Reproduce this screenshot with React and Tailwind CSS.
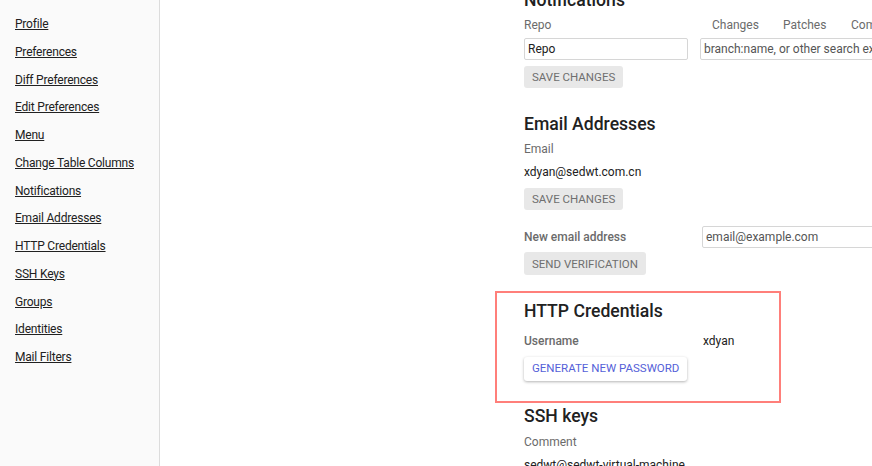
import React from "react";

const navItems = [
  "Profile",
  "Preferences",
  "Diff Preferences",
  "Edit Preferences",
  "Menu",
  "Change Table Columns",
  "Notifications",
  "Email Addresses",
  "HTTP Credentials",
  "SSH Keys",
  "Groups",
  "Identities",
  "Mail Filters",
];

function FlatButton({ children, className = "" }) {
  return (
    <button
      className={`block h-[22px] px-[8px] rounded-[3px] bg-[#e8e8e8] text-[#6f6f6f] text-[11.5px] leading-[22px] uppercase ${className}`}
    >
      {children}
    </button>
  );
}

function SectionTitle({ children, className = "" }) {
  return (
    <h2
      className={`h-[24px] leading-[24px] text-[17.6px] font-medium text-[#212121] ${className}`}
    >
      {children}
    </h2>
  );
}

function Label({ children, className = "" }) {
  return (
    <div className={`h-[18px] leading-[18px] text-[12px] text-[#6b6b6b] ${className}`}>
      {children}
    </div>
  );
}

export default function App() {
  return (
    <div
      className="flex h-[466px] w-[872px] overflow-hidden bg-white"
      style={{ fontFamily: "Roboto, 'Liberation Sans', sans-serif" }}
    >
      {/* sidebar */}
      <nav className="w-[160px] shrink-0 bg-[#fafafa] border-r border-[#dcdcdc] pt-[15px] pl-[15px] flex flex-col gap-[9.75px]">
        {navItems.map((item) => (
          <a
            key={item}
            href="#"
            className="h-[18px] leading-[18px] text-[12px] tracking-[-0.2px] text-[#212121] underline"
          >
            {item}
          </a>
        ))}
      </nav>

      {/* main */}
      <main className="flex-1 pl-[364px] -mt-[12px]">
        <SectionTitle>Notifications</SectionTitle>
        <div className="mt-[4px] flex items-center h-[18px]">
          <Label className="w-[188px]">Repo</Label>
          <div className="flex h-[18px] leading-[18px] text-[12px] text-[#6b6b6b] whitespace-nowrap">
            <span className="w-[71px]">Changes</span>
            <span className="w-[68px]">Patches</span>
            <span>Comments</span>
          </div>
        </div>
        <div className="mt-[4px] flex gap-[12px]">
          <input
            className="h-[22px] w-[164px] border border-[#d6d6d6] rounded-[2px] px-[3px] text-[12px] text-[#212121] outline-none"
            defaultValue="Repo"
          />
          <input
            className="h-[22px] w-[240px] border border-[#d6d6d6] rounded-[2px] px-[3px] text-[12px] text-[#212121] placeholder:text-[#555] outline-none"
            placeholder="branch:name, or other search expression"
          />
        </div>
        <FlatButton className="mt-[6px]">Save changes</FlatButton>

        <SectionTitle className="mt-[24px]">Email Addresses</SectionTitle>
        <Label className="mt-[4px]">Email</Label>
        <div className="mt-[5px] h-[18px] leading-[18px] text-[12px] text-[#212121]">
          xdyan@sedwt.com.cn
        </div>
        <FlatButton className="mt-[7px]">Save changes</FlatButton>

        <div className="mt-[16px] flex items-center h-[22px]">
          <div className="w-[178px] text-[12px] font-medium text-[#6b6b6b]">
            New email address
          </div>
          <input
            className="h-[22px] w-[200px] border border-[#d6d6d6] rounded-[2px] px-[3px] text-[12px] placeholder:text-[#555] outline-none"
            placeholder="email@example.com"
          />
        </div>
        <FlatButton className="mt-[4px] h-[23px]">Send verification</FlatButton>

        <div className="mt-[16px] -ml-[29px] w-[286px] border-2 border-[#ff7f7a] pl-[27px] pt-[6px] pb-[20px]">
          <SectionTitle>HTTP Credentials</SectionTitle>
          <div className="mt-[9px] flex items-center h-[18px] text-[12px]">
            <div className="w-[179px] font-medium text-[#6b6b6b]">Username</div>
            <div className="text-[#212121]">xdyan</div>
          </div>
          <button className="block mt-[7px] h-[24px] px-[8px] rounded-[3px] bg-white text-[11.5px] uppercase text-[#5561d8] shadow-[0_1px_3px_rgba(0,0,0,0.3)]">
            Generate new password
          </button>
        </div>

        <SectionTitle className="mt-[1px]">SSH keys</SectionTitle>
        <Label className="mt-[5px]">Comment</Label>
        <div className="mt-[5px] h-[18px] leading-[18px] text-[12px] text-[#212121]">
          sedwt@sedwt-virtual-machine
        </div>
      </main>
    </div>
  );
}
